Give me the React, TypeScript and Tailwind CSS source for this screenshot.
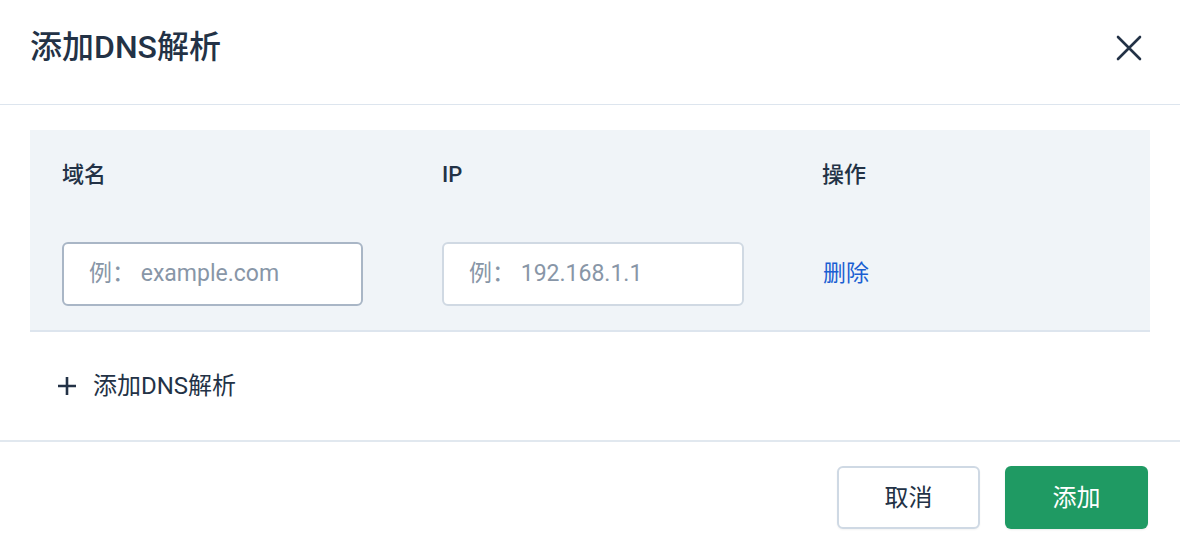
import React from "react";

export default function App() {
  return (
    <div
      className="w-[1180px] h-[548px] bg-white flex flex-col text-[#233246] overflow-hidden"
      style={{ fontFamily: 'Roboto, "Noto Sans CJK SC", sans-serif' }}
    >
      {/* header */}
      <div className="h-[105px] shrink-0 border-b border-[#dde5ee] flex items-start justify-between pl-[30px] pr-[38px] pt-[27px]">
        <h1 className="text-[32px] leading-[40px] font-medium text-[#233246]">添加DNS解析</h1>
        <button className="mt-[8px] w-[26px] h-[26px] flex items-center justify-center text-[#233246]">
          <svg width="26" height="26" viewBox="0 0 26 26" fill="none" stroke="currentColor" strokeWidth="2.6" strokeLinecap="round">
            <path d="M2 2L24 24M24 2L2 24" />
          </svg>
        </button>
      </div>

      {/* body */}
      <div className="px-[30px] pt-[25px] shrink-0">
        <div className="bg-[#f0f4f8] border-b-2 border-[#dde5ee]">
          <div className="h-[88px] grid grid-cols-[380px_380px_1fr] items-center pl-[32px] text-[22px] font-medium">
            <div>域名</div>
            <div>IP</div>
            <div>操作</div>
          </div>
          <div className="h-[112px] grid grid-cols-[380px_380px_1fr] items-center pl-[32px]">
            <div className="w-[301px] h-[64px] rounded-[6px] border-2 border-[#a9b6c6] bg-white flex items-center pl-[25px] text-[23px] text-[#8896a7]">
              例：&nbsp;example.com
            </div>
            <div className="w-[302px] h-[64px] rounded-[6px] border-2 border-[#d0d9e3] bg-white flex items-center pl-[25px] text-[23px] text-[#8896a7]">
              例：&nbsp;192.168.1.1
            </div>
            <div className="text-[23px] text-[#1b5fd2] pl-[1px]">删除</div>
          </div>
        </div>
      </div>

      {/* add row */}
      <div className="h-[110px] shrink-0 flex items-center pl-[57px] border-b-2 border-[#e1e8ef]">
        <svg width="20" height="20" viewBox="0 0 20 20" fill="none" stroke="#233246" strokeWidth="2.6">
          <path d="M10 1V19M1 10H19" />
        </svg>
        <span className="ml-[16px] text-[24px] text-[#233246]">添加DNS解析</span>
      </div>

      {/* footer */}
      <div className="flex-1 flex items-start justify-end gap-[25px] pr-[32px] pt-[24px]">
        <button className="w-[143px] h-[63px] rounded-[6px] border-2 border-[#cfd9e4] bg-white text-[24px] text-[#233246] shadow-[0_1px_2px_rgba(0,0,0,0.05)]">
          取消
        </button>
        <button className="w-[143px] h-[63px] rounded-[6px] bg-[#1f9a63] text-[24px] text-white shadow-[0_1px_2px_rgba(0,0,0,0.08)]">
          添加
        </button>
      </div>
    </div>
  );
}
